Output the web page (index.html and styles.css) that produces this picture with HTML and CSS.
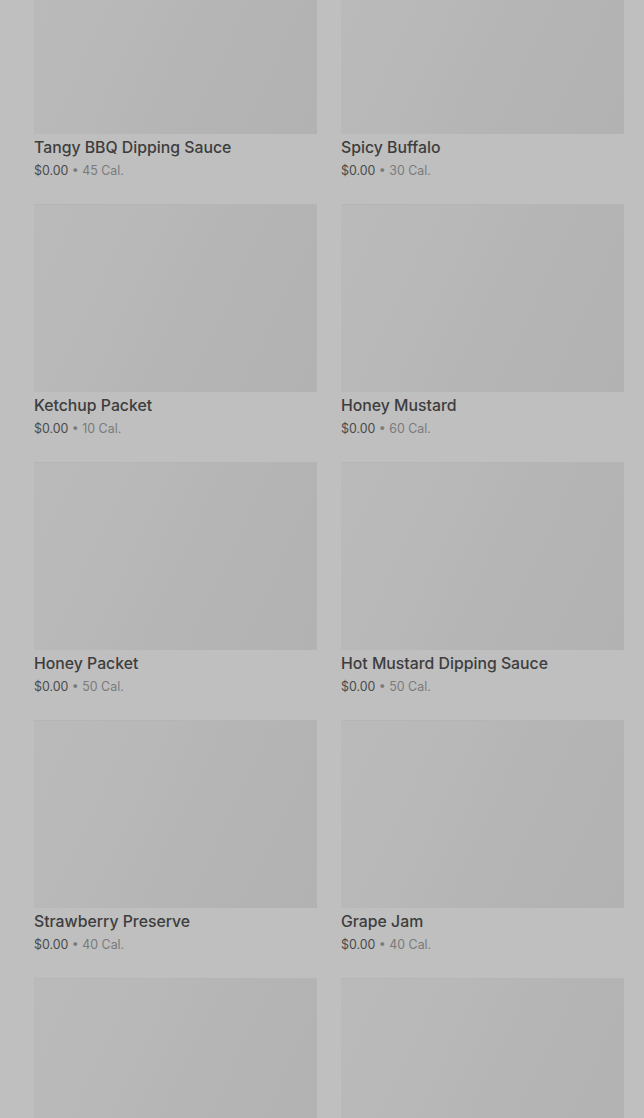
FILE: index.html
```html
<!DOCTYPE html>
<html>
  <head>
    <meta charset="UTF-8" />
    <title>Sauces</title>
    <link rel="stylesheet" href="styles.css">
  </head>
  <body>
    <div class="menu-grid">
      <div class="item">
        <div class="item-image"></div>
        <div class="item-name">Tangy BBQ Dipping Sauce</div>
        <div class="item-meta"><span class="price">$0.00</span> • 45 Cal.</div>
      </div>
      <div class="item">
        <div class="item-image"></div>
        <div class="item-name">Spicy Buffalo</div>
        <div class="item-meta"><span class="price">$0.00</span> • 30 Cal.</div>
      </div>
      <div class="item">
        <div class="item-image"></div>
        <div class="item-name">Ketchup Packet</div>
        <div class="item-meta"><span class="price">$0.00</span> • 10 Cal.</div>
      </div>
      <div class="item">
        <div class="item-image"></div>
        <div class="item-name">Honey Mustard</div>
        <div class="item-meta"><span class="price">$0.00</span> • 60 Cal.</div>
      </div>
      <div class="item">
        <div class="item-image"></div>
        <div class="item-name">Honey Packet</div>
        <div class="item-meta"><span class="price">$0.00</span> • 50 Cal.</div>
      </div>
      <div class="item">
        <div class="item-image"></div>
        <div class="item-name">Hot Mustard Dipping Sauce</div>
        <div class="item-meta"><span class="price">$0.00</span> • 50 Cal.</div>
      </div>
      <div class="item">
        <div class="item-image"></div>
        <div class="item-name">Strawberry Preserve</div>
        <div class="item-meta"><span class="price">$0.00</span> • 40 Cal.</div>
      </div>
      <div class="item">
        <div class="item-image"></div>
        <div class="item-name">Grape Jam</div>
        <div class="item-meta"><span class="price">$0.00</span> • 40 Cal.</div>
      </div>
      <div class="item">
        <div class="item-image"></div>
      </div>
      <div class="item">
        <div class="item-image"></div>
      </div>
    </div>
  </body>
</html>
```

FILE: styles.css
```css
/* page under a dimmed backdrop */
body {
  font-family: Inter, "Noto Sans", sans-serif;
  margin: 0;
  padding: 0;
  background-color: #bfbfbf;
  height: 1118px;
  overflow: hidden;
}

.menu-grid {
  display: grid;
  grid-template-columns: 1fr 1fr;
  column-gap: 24px;
  row-gap: 24px;
  padding: 0 20px 0 34px;
  margin-top: -54px;
}

.item-image {
  height: 188px;
  background: linear-gradient(115deg, #bababa 0%, #b8b8b8 35%, #b4b4b4 65%, #b2b2b2 100%);
  box-shadow: inset 0 1px 0 #b5b5b5;
}

.item-name {
  margin-top: 4px;
  font-size: 15.8px;
  line-height: 20px;
  font-weight: 500;
  color: #3d3d3d;
}

.item-meta {
  margin-top: 4px;
  font-size: 12.4px;
  line-height: 18px;
  color: #7a7a7a;
}

.item-meta .price {
  color: #4a4a4a;
}
```
